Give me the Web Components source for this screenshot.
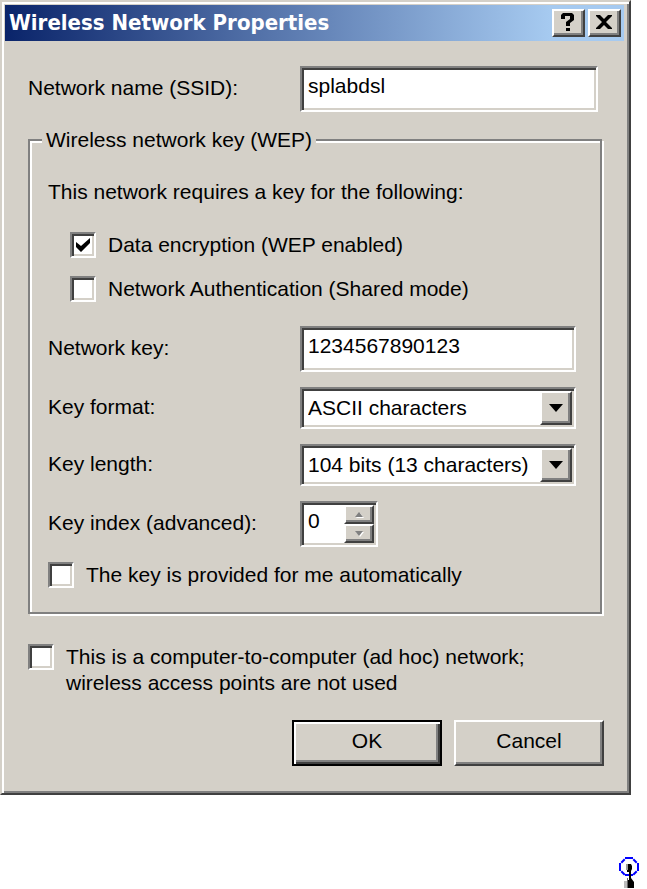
<!DOCTYPE html>
<html lang="en">
<head>
<meta charset="utf-8">
<title>Wireless Network Properties</title>
<style>
body {
  --face: #d4d0c8;
  --shadow: #808080;
  --dark: #404040;
  --light: #ffffff;
  margin: 0;
  background: #fff;
  color: #000;
  font: 21px/26px "Liberation Sans", Arial, sans-serif;
}
</style>
</head>
<body>
<wireless-page></wireless-page>

<script>
// shared by every element that has a sunken or raised edge
const edges = `
  * { box-sizing: border-box; }
  .sunken {
    border: 2px solid;
    border-color: var(--shadow) var(--light) var(--light) var(--shadow);
    box-shadow: inset 2px 2px var(--dark), inset -2px -2px var(--face);
    background: #fff;
  }
  .raised {
    border: 2px solid;
    border-color: var(--light) var(--dark) var(--dark) var(--light);
    box-shadow: inset -2px -2px var(--shadow);
    background: var(--face);
  }
  input, select, button {
    font: inherit;
    color: inherit;
    margin: 0;
    border-radius: 0;
    outline: none;
  }
`;

// label on the left, control on the right
const fieldRow = `
  :host { display: block; }
  .row {
    display: grid;
    grid-template-columns: var(--label-width, 252px) minmax(0, 1fr);
    align-items: center;
  }
  label { padding-bottom: 2px; white-space: nowrap; }
`;

class TextField extends HTMLElement {
  connectedCallback() {
    this.attachShadow({ mode: 'open' }).innerHTML = `
      <style>
        ${edges}
        ${fieldRow}
        input { width: 100%; height: 46px; padding: 0 6px 6px; }
      </style>
      <div class="row">
        <label for="field">${this.getAttribute('label')}</label>
        <input id="field" class="sunken" type="text" value="${this.getAttribute('value')}">
      </div>
    `;
  }
}

class DropField extends HTMLElement {
  connectedCallback() {
    this.attachShadow({ mode: 'open' }).innerHTML = `
      <style>
        ${edges}
        ${fieldRow}
        .box { display: grid; height: 42px; padding: 2px; }
        select {
          grid-area: 1 / 1;
          width: 100%;
          border: none;
          background: none;
          appearance: none;
          padding: 0 34px 0 4px;
        }
        .arrow {
          grid-area: 1 / 1;
          justify-self: end;
          display: grid;
          place-items: center;
          width: 32px;
          pointer-events: none;
        }
      </style>
      <div class="row">
        <label for="field">${this.getAttribute('label')}</label>
        <div class="box sunken">
          <select id="field"><option>${this.getAttribute('value')}</option></select>
          <span class="arrow raised">
            <svg width="14" height="8" viewBox="0 0 14 8"><path d="M0 0h14L7 8z"/></svg>
          </span>
        </div>
      </div>
    `;
  }
}

class SpinField extends HTMLElement {
  connectedCallback() {
    this.attachShadow({ mode: 'open' }).innerHTML = `
      <style>
        ${edges}
        ${fieldRow}
        .box { display: flex; width: 78px; height: 46px; padding: 2px; }
        input {
          flex: 1;
          min-width: 0;
          border: none;
          background: none;
          padding: 0 0 6px 4px;
        }
        .steps { display: grid; grid-template-rows: 1fr 1fr; width: 30px; }
        button { display: grid; place-items: center; padding: 0; }
        svg { fill: var(--shadow); filter: drop-shadow(1px 1px #fff); }
      </style>
      <div class="row">
        <label for="field">${this.getAttribute('label')}</label>
        <div class="box sunken">
          <input id="field" type="text" inputmode="numeric" value="${this.getAttribute('value')}">
          <div class="steps">
            <button class="raised" type="button" aria-label="Up" disabled>
              <svg width="8" height="5" viewBox="0 0 8 5"><path d="M0 5h8L4 0z"/></svg>
            </button>
            <button class="raised" type="button" aria-label="Down" disabled>
              <svg width="8" height="5" viewBox="0 0 8 5"><path d="M0 0h8L4 5z"/></svg>
            </button>
          </div>
        </div>
      </div>
    `;
  }
}

class CheckField extends HTMLElement {
  connectedCallback() {
    this.attachShadow({ mode: 'open' }).innerHTML = `
      <style>
        ${edges}
        :host { display: block; }
        label { display: flex; align-items: flex-start; gap: 12px; }
        .tick { display: grid; flex: none; }
        input { grid-area: 1 / 1; appearance: none; width: 26px; height: 26px; }
        svg { grid-area: 1 / 1; place-self: center; visibility: hidden; pointer-events: none; }
        input:checked + svg { visibility: visible; }
      </style>
      <label>
        <span class="tick">
          <input class="sunken" type="checkbox" ${this.hasAttribute('checked') ? 'checked' : ''}>
          <svg width="16" height="16" viewBox="0 0 16 16"><path d="M1 5l5 4 9-8v5l-9 9-5-5z"/></svg>
        </span>
        <span><slot></slot></span>
      </label>
    `;
  }
}

class GroupBox extends HTMLElement {
  connectedCallback() {
    this.attachShadow({ mode: 'open' }).innerHTML = `
      <style>
        ${edges}
        :host { display: block; padding: 0 2px 2px 0; }
        /* etched line: grey border with a white one beside it */
        fieldset {
          min-width: 0;
          margin: 0;
          padding: 26px 24px 24px 18px;
          border: 2px solid var(--shadow);
          box-shadow: inset 2px 2px var(--light), 2px 2px var(--light);
        }
        legend {
          margin-left: -6px;
          padding: 0 4px;
          background: var(--face);
        }
      </style>
      <fieldset>
        <legend>${this.getAttribute('label')}</legend>
        <slot></slot>
      </fieldset>
    `;
  }
}

class PushButton extends HTMLElement {
  connectedCallback() {
    this.attachShadow({ mode: 'open' }).innerHTML = `
      <style>
        ${edges}
        :host { display: block; }
        button { display: block; width: 150px; height: 46px; padding: 0 0 4px; }
        :host([default]) button {
          border-color: #000;
          box-shadow: inset 2px 2px var(--light), inset -2px -2px var(--dark), inset -4px -4px var(--shadow);
        }
      </style>
      <button class="raised" type="button"><slot></slot></button>
    `;
  }
}

class DialogWindow extends HTMLElement {
  connectedCallback() {
    this.attachShadow({ mode: 'open' }).innerHTML = `
      <style>
        ${edges}
        :host { display: block; }
        .window {
          border: 2px solid;
          border-color: var(--face) var(--dark) var(--dark) var(--face);
          box-shadow: inset 2px 2px var(--light), inset -2px -2px var(--shadow);
          background: var(--face);
          padding: 3px 5px 2px 3px;
        }
        header {
          display: flex;
          align-items: center;
          gap: 3px;
          height: 36px;
          padding: 0 3px 0 4px;
          background: linear-gradient(to right, #0a246a, #a6caf0 88%);
        }
        h1 {
          flex: 1;
          margin: 0;
          color: #fff;
          font: bold 22px/26px "DejaVu Sans Condensed", "DejaVu Sans", sans-serif;
          white-space: nowrap;
        }
        header button {
          display: grid;
          place-items: center;
          width: 33px;
          height: 28px;
          padding: 0 2px 2px 0;
        }
        .client { padding: 25px 20px 25px 23px; }
      </style>
      <section class="window">
        <header>
          <h1>${this.getAttribute('label')}</h1>
          <button class="raised" type="button" aria-label="Help">
            <svg width="13" height="18" viewBox="0 0 13 18"><path d="M2 0h9l2 2v5l-4 3v3H5V9l4-3V3H4v3H0V2zM5 15h4v3H5z"/></svg>
          </button>
          <button class="raised" type="button" aria-label="Close">
            <svg width="16" height="14" viewBox="0 0 16 14"><path d="M0 0h4l4 4 4-4h4v1l-6 6 6 6v1h-4l-4-4-4 4H0v-1l6-6-6-6z"/></svg>
          </button>
        </header>
        <div class="client"><slot></slot></div>
      </section>
    `;
  }
}

class AntennaIcon extends HTMLElement {
  connectedCallback() {
    this.attachShadow({ mode: 'open' }).innerHTML = `
      <style>
        :host { display: block; }
        svg { display: block; }
      </style>
      <svg width="20" height="32" viewBox="0 0 20 32">
        <path d="M7 1h6M15 3l2 2M19 7v6M17 15l-2 2M13 18H7M5 17l-2-2M1 13V7M3 5l2-2" fill="none" stroke="#00f" stroke-width="2" stroke-linecap="square"/>
        <path d="M7 7h2v6H7z" fill="#999"/>
        <path d="M9 7h3l1 2v3l-1 2v7l3 4v6H9v-8h1v-8H8v-2h1z" fill="#000"/>
        <path d="M5 24h3v7H5z" fill="#bbb"/>
        <path d="M8 21h1v10H8z" fill="#666"/>
      </svg>
    `;
  }
}

class WirelessPage extends HTMLElement {
  connectedCallback() {
    this.attachShadow({ mode: 'open' }).innerHTML = `
      <style>
        :host { display: flex; flex-direction: column; }
        dialog-window { margin-right: 16px; }
        .ssid { --label-width: 272px; margin: 0 6px 15px 0; }
        p { margin: 0 0 27px; }
        .needs { display: grid; gap: 18px; margin: 0 0 24px 22px; }
        .fields { display: grid; gap: 15px; }
        .adhoc { margin: 28px 0 24px; }
        .actions { display: flex; justify-content: flex-end; gap: 12px; }
        antenna-icon { align-self: flex-end; margin: 62px 8px 0 0; }
      </style>
      <dialog-window label="Wireless Network Properties">
        <text-field class="ssid" label="Network name (SSID):" value="splabdsl"></text-field>
        <group-box label="Wireless network key (WEP)">
          <p>This network requires a key for the following:</p>
          <div class="needs">
            <check-field checked>Data encryption (WEP enabled)</check-field>
            <check-field>Network Authentication (Shared mode)</check-field>
          </div>
          <div class="fields">
            <text-field label="Network key:" value="1234567890123"></text-field>
            <drop-field label="Key format:" value="ASCII characters"></drop-field>
            <drop-field label="Key length:" value="104 bits (13 characters)"></drop-field>
            <spin-field label="Key index (advanced):" value="0"></spin-field>
            <check-field>The key is provided for me automatically</check-field>
          </div>
        </group-box>
        <check-field class="adhoc">This is a computer-to-computer (ad hoc) network;<br>wireless access points are not used</check-field>
        <div class="actions">
          <push-button default>OK</push-button>
          <push-button>Cancel</push-button>
        </div>
      </dialog-window>
      <antenna-icon></antenna-icon>
    `;
  }
}

customElements.define('text-field', TextField);
customElements.define('drop-field', DropField);
customElements.define('spin-field', SpinField);
customElements.define('check-field', CheckField);
customElements.define('group-box', GroupBox);
customElements.define('push-button', PushButton);
customElements.define('dialog-window', DialogWindow);
customElements.define('antenna-icon', AntennaIcon);
customElements.define('wireless-page', WirelessPage);
</script>
</body>
</html>
